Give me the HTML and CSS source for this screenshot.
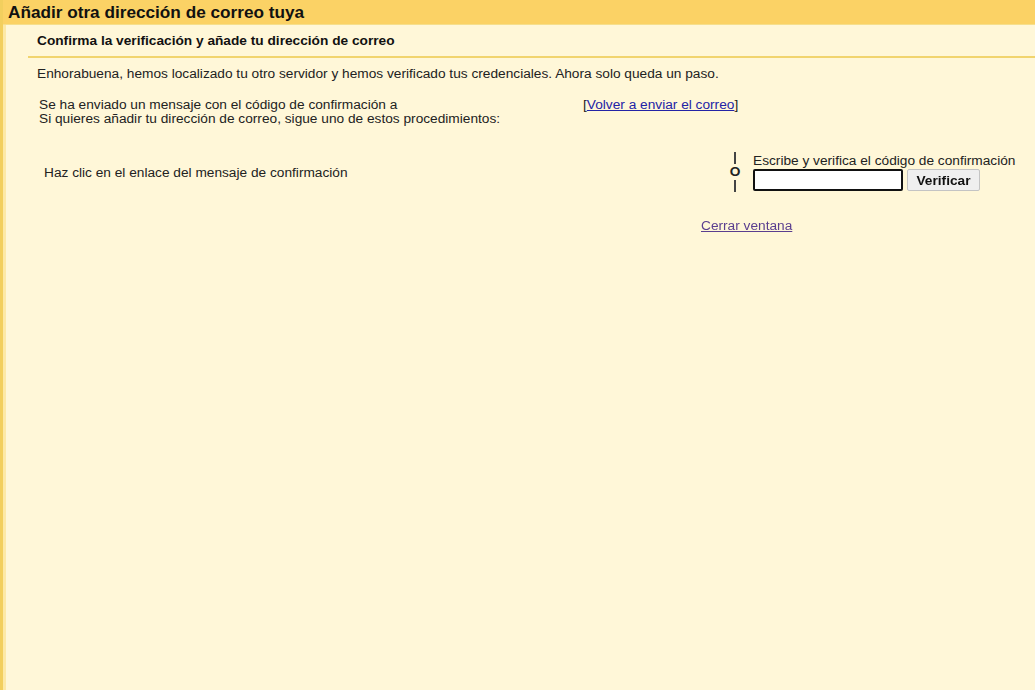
FILE: index.html
```html
<!DOCTYPE html>
<html lang="es">
<head>
<meta charset="utf-8">
<title>Añadir otra dirección de correo tuya</title>
<link rel="stylesheet" href="styles.css">
</head>
<body>
<div class="page">
  <div class="header">Añadir otra dirección de correo tuya</div>
  <div class="content">
    <div class="subheader">Confirma la verificación y añade tu dirección de correo</div>
    <p class="intro">Enhorabuena, hemos localizado tu otro servidor y hemos verificado tus credenciales. Ahora solo queda un paso.</p>
    <div class="sent">
      <div class="sent-text">
        <div>Se ha enviado un mensaje con el código de confirmación a</div>
        <div>Si quieres añadir tu dirección de correo, sigue uno de estos procedimientos:</div>
      </div>
      <div class="resend">[<a href="#" class="link">Volver a enviar el correo</a>]</div>
    </div>
    <div class="options">
      <div class="opt-left">Haz clic en el enlace del mensaje de confirmación</div>
      <div class="opt-sep">
        <span class="sep-line"></span>
        <span class="sep-o">O</span>
        <span class="sep-line"></span>
      </div>
      <div class="opt-right">
        <div class="code-label">Escribe y verifica el código de confirmación</div>
        <div class="code-row">
          <input class="code-input" type="text" autofocus>
          <button class="verify">Verificar</button>
        </div>
      </div>
    </div>
    <div class="close"><a href="#" class="link visited">Cerrar ventana</a></div>
  </div>
</div>
</body>
</html>
```
FILE: styles.css
```css
html, body {
  margin: 0;
  padding: 0;
  height: 100%;
}
body {
  background: #fff7d8;
  font-family: "Liberation Sans", Arial, sans-serif;
  font-size: 13.7px;
  color: #222;
}
.page {
  min-height: 100%;
  box-sizing: border-box;
  border-left: 3px solid #f2cf5e;
  box-shadow: inset 3px 0 0 #fde9a6;
}
.header {
  background: #fbd265;
  height: 25px;
  line-height: 25px;
  padding-left: 5px;
  font-size: 17.2px;
  font-weight: bold;
  color: #111;
  border-bottom: 1px solid #f6df8c;
  box-sizing: border-box;
}
.content {
  margin-left: 25px;
}
.subheader {
  height: 31px;
  line-height: 31px;
  padding-left: 9px;
  font-weight: bold;
  color: #111;
  border-bottom: 2px solid #f1d46e;
}
.intro {
  margin: 8px 0 0 9px;
  line-height: 15px;
}
.sent {
  display: flex;
  margin-top: 17px;
  line-height: 14px;
}
.sent-text {
  width: 555px;
  padding-left: 11px;
  box-sizing: border-box;
}
.resend {
  color: #222;
}
.link {
  color: #2323a6;
  text-decoration: underline;
}
.link.visited {
  color: #5a3e8f;
}
.options {
  display: flex;
  align-items: center;
  margin-top: 26px;
}
.opt-left {
  width: 701px;
  padding-left: 16px;
  box-sizing: border-box;
}
.opt-sep {
  width: 12px;
  display: flex;
  flex-direction: column;
  align-items: center;
}
.sep-line {
  width: 2px;
  height: 12px;
  background: #444;
}
.sep-o {
  font-weight: bold;
  font-size: 13.7px;
  line-height: 16px;
}
.opt-right {
  margin-left: 12px;
}
.code-label {
  line-height: 16px;
}
.code-row {
  display: flex;
  align-items: center;
  gap: 4px;
  margin-top: 0;
}
.code-input {
  width: 150px;
  height: 22px;
  box-sizing: border-box;
  border: 2px solid #111;
  border-radius: 2px;
  background: #fff;
  margin: 0;
  padding: 0 2px;
  font-family: inherit;
  font-size: 13.7px;
  outline: none;
}
.verify {
  height: 22px;
  width: 73px;
  box-sizing: border-box;
  border: 1px solid #c4c4c4;
  border-radius: 2px;
  background: #efefef;
  font-family: inherit;
  font-size: 13.7px;
  font-weight: bold;
  color: #111;
  padding: 0;
  margin: 0;
}
.close {
  margin-top: 26px;
  padding-left: 673px;
}
```
